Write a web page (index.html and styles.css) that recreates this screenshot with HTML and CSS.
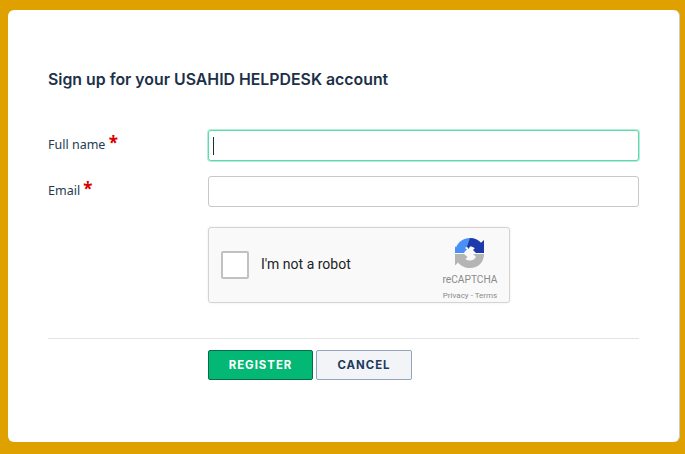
FILE: index.html
```html
<!DOCTYPE html>
<html lang="en">
<head>
<meta charset="utf-8">
<title>Sign up</title>
<link rel="stylesheet" href="styles.css">
</head>
<body>
<main class="card">
  <h1 class="title">Sign up for your USAHID HELPDESK account</h1>
  <form class="form">
    <div class="row">
      <label class="label" for="name">Full name <span class="req">*</span></label>
      <div class="input focus" id="name"><span class="caret"></span></div>
    </div>
    <div class="row">
      <label class="label" for="email">Email <span class="req">*</span></label>
      <div class="input" id="email"></div>
    </div>
    <div class="captcha">
      <span class="check"></span>
      <span class="robot">I'm not a robot</span>
      <div class="brand">
        <svg class="logo" width="32" height="32" viewBox="0 0 32 32">
          <path fill="#4a90f5" d="M16 1C9.500 1 4.200 5 2 10.500L1 9V16H10c.8-1.600 1.700-2.700 3-3.500l-2-1.500c1.300-1 3-1.500 5-1.500z"/>
          <path fill="#1c3aa9" d="M16 1c4.500 0 8.400 1.800 11 4.800L30 3V16H22l-3-3 1.800-1.700C19.500 10 18 9.500 16 9.500l-1.500 2.500L13 9.500z"/>
          <path fill="#b5b5b5" d="M1 17h9l3.500 3-2 2c1.300 1 2.800 1.500 4.500 1.500 2.800 0 5-1.400 6-3.700l-3-2.800h11c0 8-5.500 14-14 14-5 0-9.300-2.200-12-5.600L1 28.500z"/>
        </svg>
        <span class="brand-name">reCAPTCHA</span>
        <span class="brand-links">Privacy - Terms</span>
      </div>
    </div>
    <hr class="rule">
    <div class="actions">
      <button type="button" class="btn primary">REGISTER</button>
      <button type="button" class="btn secondary">CANCEL</button>
    </div>
  </form>
</main>
</body>
</html>
```
FILE: styles.css
```css
* { box-sizing: border-box; }
html, body { height: 100%; }
body {
  margin: 0;
  padding: 10px 5px 12px 8px;
  background: #dfa100;
  font-family: "Open Sans", "Noto Sans", sans-serif;
  color: #243b53;
}
.card {
  height: 432px;
  background: #fff;
  border-radius: 6px;
  border-right: 1px solid #c9ccd0;
  padding: 58px 40px 0;
}
.title {
  margin: 0;
  height: 24px;
  font-family: "Inter", sans-serif;
  font-size: 15.850px;
  line-height: 24px;
  font-weight: 600;
  color: #1c3048;
  white-space: nowrap;
}
.form { margin-top: 38px; width: 591px; }
.row {
  display: grid;
  grid-template-columns: 160px 431px;
  height: 31px;
  margin-bottom: 15px;
}
.label {
  font-family: "Noto Sans", sans-serif;
  font-size: 12.500px;
  line-height: 29px;
  color: #243b53;
}
.req { color: #d60000; font-size: 17px; font-weight: 700; line-height: 17px; }
.input {
  height: 31px;
  border: 1px solid #c8c8c8;
  border-radius: 3px;
  background: #fff;
  display: flex;
  align-items: center;
  padding-left: 4px;
}
.focus { border-color: #62d9ab; box-shadow: 0 0 0 1px #b5eed8; }
.caret { width: 1px; height: 18px; background: #1f2d3d; }
.captcha {
  margin: 20px 0 0 160px;
  width: 302px;
  height: 76px;
  background: #f9f9f9;
  border: 1px solid #d3d3d3;
  border-radius: 3px;
  box-shadow: 0 0 3px rgba(0,0,0,.08);
  display: flex;
  align-items: center;
  padding-left: 12px;
  font-family: Roboto, sans-serif;
}
.check {
  width: 28px;
  height: 28px;
  background: #fff;
  border: 2px solid #c1c1c1;
  border-radius: 2px;
}
.robot { margin: 0 0 2px 12px; font-size: 14px; color: #222; flex: 1; }
.brand {
  width: 76px;
  margin-right: 1px;
  display: flex;
  flex-direction: column;
  align-items: center;
  color: #8b8b8b;
}
.logo { margin: 9px 0 1px; }
.brand-name { font-size: 10.200px; line-height: 14px; margin-top: 3px; }
.brand-links { font-size: 8px; line-height: 12px; margin-top: 3px; }
.rule { margin: 35px 0 0; height: 1px; border: 0; background: #e4e4e4; }
.actions { margin: 11px 0 0 160px; display: flex; gap: 3px; }
.btn {
  height: 30px;
  border-radius: 2px;
  font-family: "Inter", sans-serif;
  font-size: 11.400px;
  font-weight: 700;
  letter-spacing: 1px;
  padding: 0;
}
.primary { width: 105px; background: #03b874; border: 1px solid #0a6b48; color: #fff; }
.secondary { width: 96px; background: #f2f4f7; border: 1px solid #92a5bb; color: #1c3a5c; }
```
